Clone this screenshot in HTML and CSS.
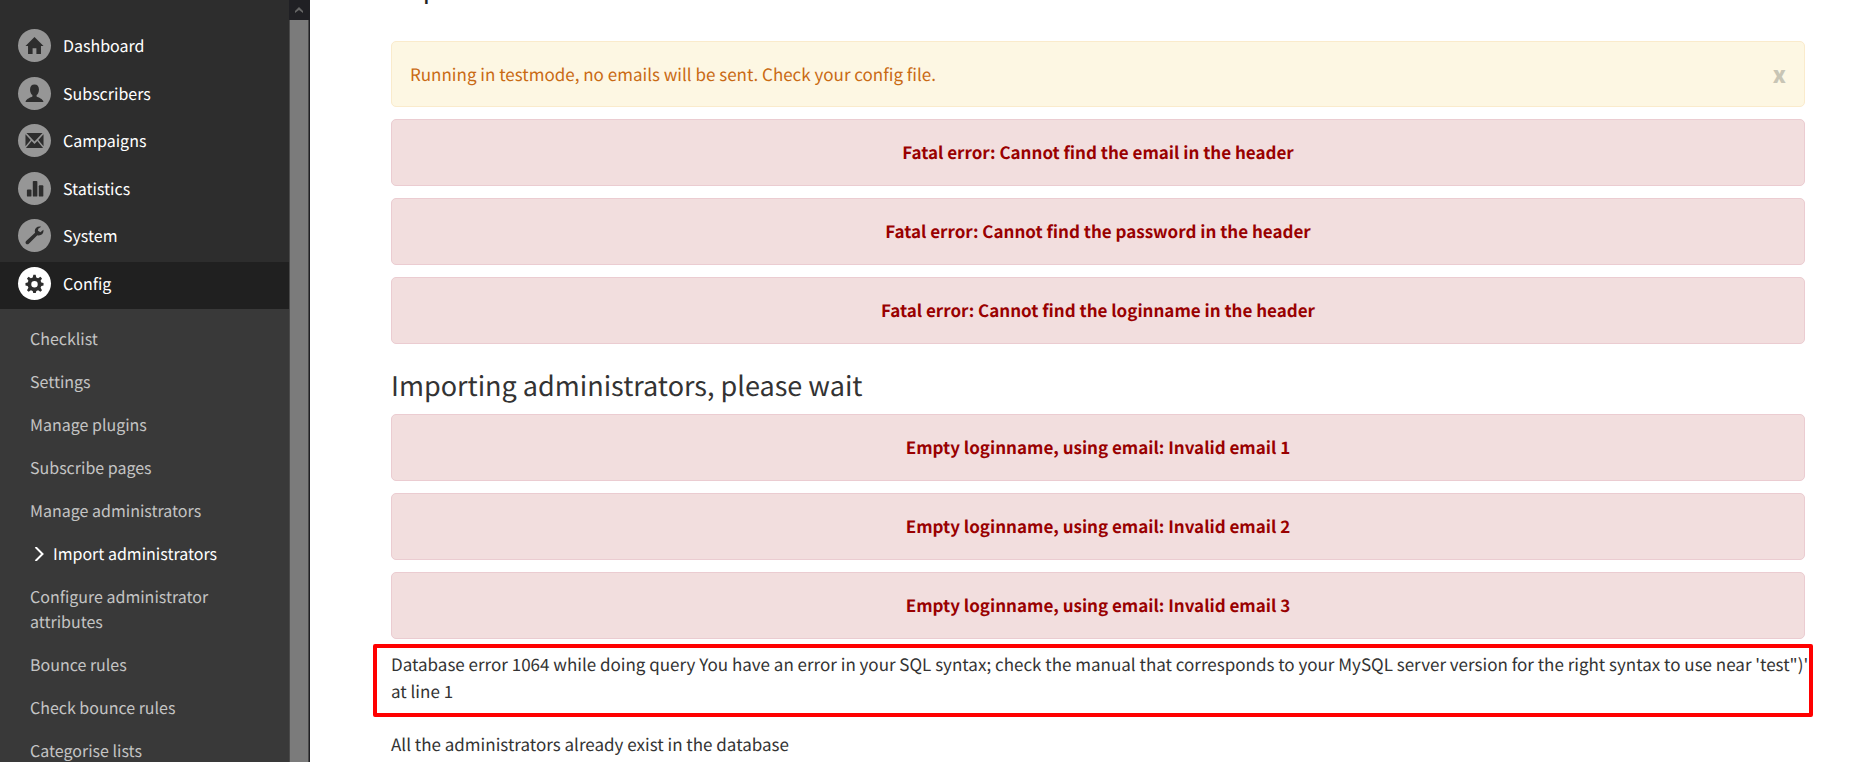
FILE: index.html
```
<!DOCTYPE html>
<html lang="en">
<head>
<meta charset="utf-8">
<title>Import administrators</title>
<link rel="stylesheet" href="styles.css">
</head>
<body>
<div class="layout">
  <aside class="sidebar">
    <nav class="nav" aria-label="Main menu">
      <ul class="menu">
        <li><a class="menu-link" href="#"><span class="badge"><svg viewBox="0 0 20 20"><path d="M10 1 .5 10.500h2.700V19h4.800v-6h4v6h4.800v-8.500h2.700z"/></svg></span>Dashboard</a></li>
        <li><a class="menu-link" href="#"><span class="badge"><svg viewBox="0 0 20 20"><path d="M10 .5c-3 0-4.700 2-4.700 5.200 0 2.400.9 4.800 2.500 6v1.500C6 14.300 1 15.500.6 19h18.800c-.4-3.500-5.400-4.700-7.200-5.800v-1.500c1.600-1.200 2.500-3.600 2.500-6C14.700 2.500 13 .5 10 .5z"/></svg></span>Subscribers</a></li>
        <li><a class="menu-link" href="#"><span class="badge"><svg viewBox="0 0 20 20"><path d="M1.500 2h17L10 11zM.5 3.500 6 9.500.5 16zM19.500 3.500 14 9.500l5.500 6.500zM7 10.500l3 3.200 3-3.200 6 7.500H1z"/></svg></span>Campaigns</a></li>
        <li><a class="menu-link" href="#"><span class="badge"><svg viewBox="0 0 20 20"><rect x="2" y="11" width="4.800" height="7.500" rx="1"/><rect x="8.200" y="2" width="4.800" height="16.500" rx="1"/><rect x="14.500" y="6.500" width="4.800" height="12" rx="1"/></svg></span>Statistics</a></li>
        <li><a class="menu-link" href="#"><span class="badge"><svg viewBox="0 0 20 20"><path d="M19.300 4 16.200 6.700l-2.500-1.700.2-2.200L17 .9C13.800-.2 10.500 1.700 10.300 5c0 .8.100 1.500.3 2.100L1.200 15.800c-1.900 2.100.7 4.700 2.800 2.900l9-8.900c3.600 1 7.300-1.500 6.300-5.800z"/></svg></span>System</a></li>
        <li><a class="menu-link menu-link-active" href="#"><span class="badge"><svg viewBox="0 0 20 20"><path fill-rule="evenodd" d="M8.800.8h2.400l.7 2.900 1.900.8 2.400-1.500 1.700 1.700-1.500 2.400.8 1.900 2.300.6v2.400l-2.300.7-.8 1.900 1.500 2.400-1.700 1.700-2.400-1.500-1.900.8-.7 2.500H8.800l-.7-2.500-1.900-.8-2.400 1.500L2.100 17l1.500-2.400-.8-1.900-2.300-.7V9.600L2.800 9l.8-1.900-1.500-2.400L3.800 3l2.400 1.500 1.900-.8zM10 7.300a3.400 3.400 0 1 0 0 6.800 3.400 3.400 0 0 0 0-6.800z"/></svg></span>Config</a></li>
      </ul>
      <ul class="submenu">
        <li><a class="sub-link" href="#">Checklist</a></li>
        <li><a class="sub-link" href="#">Settings</a></li>
        <li><a class="sub-link" href="#">Manage plugins</a></li>
        <li><a class="sub-link" href="#">Subscribe pages</a></li>
        <li><a class="sub-link" href="#">Manage administrators</a></li>
        <li><a class="sub-link sub-link-active" href="#"><svg class="chevron" viewBox="0 0 10 14"><path d="M1.500 0 8.500 7l-7 7"/></svg>Import administrators</a></li>
        <li><a class="sub-link" href="#">Configure administrator attributes</a></li>
        <li><a class="sub-link" href="#">Bounce rules</a></li>
        <li><a class="sub-link" href="#">Check bounce rules</a></li>
        <li><a class="sub-link" href="#">Categorise lists</a></li>
      </ul>
    </nav>
    <div class="scrollbar">
      <button class="scroll-up" type="button" aria-label="Scroll up"><svg viewBox="0 0 8 6"><path d="M0 4 4 0l4 4v2L4 3 0 6z"/></svg></button>
      <div class="scroll-thumb"></div>
    </div>
  </aside>
  <main class="content">
    <h1 class="page-title">Import administrators</h1>
    <div class="alert alert-warning">
      <span>Running in testmode, no emails will be sent. Check your config file.</span>
      <button class="close" type="button" aria-label="Close">x</button>
    </div>
    <div class="alert alert-error">Fatal error: Cannot find the email in the header</div>
    <div class="alert alert-error">Fatal error: Cannot find the password in the header</div>
    <div class="alert alert-error">Fatal error: Cannot find the loginname in the header</div>
    <h2 class="section-title">Importing administrators, please wait</h2>
    <div class="alert alert-error">Empty loginname, using email: Invalid email 1</div>
    <div class="alert alert-error">Empty loginname, using email: Invalid email 2</div>
    <div class="alert alert-error">Empty loginname, using email: Invalid email 3</div>
    <p class="db-error">Database error 1064 while doing query You have an error in your SQL syntax; check the manual that corresponds to your MySQL server version for the right syntax to use near 'test")' at line 1</p>
    <p class="result">All the administrators already exist in the database</p>
  </main>
</div>
</body>
</html>
```
FILE: styles.css
```
* {
  box-sizing: border-box;
}

body {
  margin: 0;
  background: #fff;
  color: #333;
  font-family: "Noto Sans CJK SC", "Noto Sans", sans-serif;
  font-size: 17px;
  line-height: 27px;
  text-rendering: geometricPrecision;
}

ul {
  margin: 0;
  padding: 0;
  list-style: none;
}

a {
  color: inherit;
  text-decoration: none;
}

button {
  border: 0;
  padding: 0;
  background: none;
  font: inherit;
}

.layout {
  display: flex;
  height: 100vh;
  overflow: hidden;
}

/* Sidebar */
.sidebar {
  display: flex;
  flex: none;
  width: 310px;
  background: #2d2d2d;
  font-size: 16px;
  line-height: 25px;
}

.nav {
  display: flex;
  flex: 1;
  flex-direction: column;
  padding-top: 24px;
  overflow: hidden;
}

.menu {
  display: grid;
  flex: none;
  grid-template-rows: repeat(6, 1fr);
  height: 285px;
}

.menu-link {
  display: flex;
  align-items: flex-start;
  gap: 12px;
  height: 100%;
  padding: 5px 18px;
  color: #fff;
  line-height: 33px;
}

.menu-link-active {
  background: #202020;
}

.badge {
  display: flex;
  flex: none;
  align-items: center;
  justify-content: center;
  width: 33px;
  height: 33px;
  border-radius: 50%;
  background: #969696;
}

.badge svg {
  width: 19px;
  height: 19px;
  fill: #2d2d2d;
}

.menu-link-active .badge {
  background: #fff;
}

.submenu {
  display: flex;
  flex: 1 0 auto;
  flex-direction: column;
  gap: 18px;
  padding: 17px 30px;
  background: #393939;
  color: #c4c4c4;
}

.sub-link {
  display: block;
}

.sub-link-active {
  display: flex;
  align-items: center;
  gap: 9px;
  padding-left: 4px;
  color: #fff;
}

.chevron {
  width: 10px;
  height: 14px;
  fill: none;
  stroke: #fff;
  stroke-width: 2;
}

.scrollbar {
  display: flex;
  flex: none;
  flex-direction: column;
  width: 21px;
  border-right: 1px solid #202024;
  background: #4a4a4a;
}

.scroll-up {
  display: flex;
  align-items: center;
  justify-content: center;
  height: 20px;
  background: #202024;
}

.scroll-up svg {
  width: 8px;
  height: 6px;
  fill: #666;
}

.scroll-thumb {
  flex: 1;
  margin: 0 1px;
  background: #7b7b7b;
}

/* Content */
.content {
  flex: 1;
  min-width: 0;
  padding: 0 70px 0 81px;
}

.page-title {
  margin: -32px 0 33px;
  color: #222;
  font-size: 26px;
  font-weight: 400;
  line-height: 40px;
}

.alert {
  margin-bottom: 12px;
  border: 1px solid;
  border-radius: 5px;
  padding: 18px 18px 20px;
}

.alert-warning {
  display: flex;
  align-items: center;
  justify-content: space-between;
  padding-bottom: 19px;
  border-color: #faebcc;
  background: #fdf7e3;
  color: #c96a14;
}

.close {
  color: #c8c5b5;
  font-size: 22px;
  font-weight: 900;
  line-height: 27px;
}

.alert-error {
  border-color: #ebccd1;
  background: #f2dede;
  color: #900;
  font-weight: 700;
  text-align: center;
}

.section-title {
  margin: 21px 0 9px;
  font-size: 27px;
  font-weight: 400;
  line-height: 40px;
}

.db-error {
  margin: -7px -8px 13px -18px;
  border: 4px solid #f00;
  border-radius: 2px;
  padding: 2px 0 9px 14px;
}

.result {
  margin: 0;
}
```
